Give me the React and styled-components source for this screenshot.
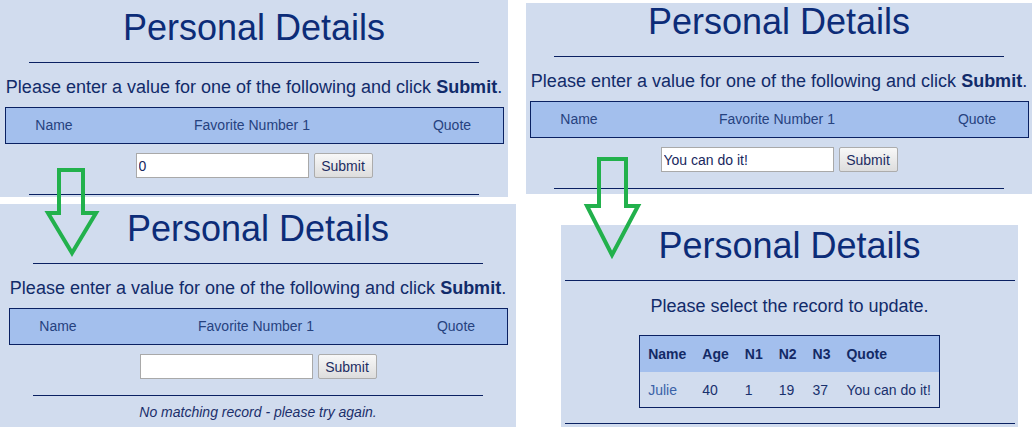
import React from "react";
import styled, { createGlobalStyle } from "styled-components";

const GlobalStyle = createGlobalStyle`
  html, body {
    margin: 0;
    padding: 0;
    background: #fff;
  }
  body {
    font-family: "Liberation Sans", Arial, sans-serif;
  }
`;

// the picture is a collage of four screenshots, so each shot sits on a free canvas
const Canvas = styled.div`
  position: relative;
  width: 1032px;
  height: 431px;
  background: #fff;
  overflow: hidden;
`;

const Shot = styled.section`
  position: absolute;
  left: ${(p) => p.$x}px;
  top: ${(p) => p.$y}px;
  width: ${(p) => p.$w}px;
  height: ${(p) => p.$h}px;
  background: #d1dcee;
  overflow: hidden;
`;

const Page = styled.div`
  margin-top: ${(p) => p.$shift}px;
  display: flex;
  flex-direction: column;
  align-items: center;
  color: #112b6a;
`;

const Title = styled.h1`
  margin: 8px 0 0;
  font-size: 36px;
  font-weight: normal;
  line-height: 40px;
  color: #0c2c78;
  white-space: nowrap;
`;

const Rule = styled.div`
  flex-shrink: 0;
  width: 450px;
  height: 0;
  margin-top: ${(p) => p.$gap}px;
  border-top: 1px solid #0a2162;
`;

const Prompt = styled.p`
  margin: ${(p) => p.$gap}px 0 0;
  font-size: 18px;
  line-height: 22px;
  white-space: nowrap;

  b {
    font-weight: bold;
  }
`;

const HeaderBar = styled.div`
  box-sizing: border-box;
  margin-top: 9px;
  width: 499px;
  height: 37px;
  border: 1px solid #0a2162;
  background: #a3bfed;
  display: grid;
  grid-template-columns: 97px 1fr 101px;
  font-size: 14px;
  line-height: 35px;
  text-align: center;
  color: #26427f;
`;

const SearchRow = styled.form`
  margin-top: 9px;
  display: flex;
  gap: 5px;
  height: 25px;
`;

const Input = styled.input`
  box-sizing: border-box;
  width: 173px;
  height: 25px;
  margin: 0;
  padding: 0 2px;
  border: 1px solid #a9a9a9;
  background: #fff;
  font-family: "Liberation Sans", Arial, sans-serif;
  font-size: 14px;
  color: #18285e;
  outline: none;
`;

const Button = styled.button`
  box-sizing: border-box;
  width: 59px;
  height: 25px;
  margin: 0;
  padding: 0;
  border: 1px solid #acacac;
  border-radius: 2px;
  background: linear-gradient(#f8f8f8, #dddddd);
  font-family: "Liberation Sans", Arial, sans-serif;
  font-size: 14px;
  color: #1d2d62;
`;

const Message = styled.p`
  margin: 7px 0 0;
  font-size: 14px;
  font-style: italic;
  line-height: 18px;
  color: #1b2f6b;
`;

const Records = styled.table`
  margin-top: 18px;
  border-collapse: collapse;
  border: 1px solid #0a2162;
  font-size: 14px;
  color: #18306d;

  th {
    height: 36px;
    padding: 0 8px;
    background: #a3bfed;
    text-align: left;
    font-weight: bold;
    color: #132a66;
  }

  td {
    height: 35px;
    padding: 0 8px;
    text-align: left;
  }
`;

const NameLink = styled.a`
  color: #3a62a8;
  text-decoration: none;
`;

const Arrows = styled.svg`
  position: absolute;
  left: 0;
  top: 0;
  pointer-events: none;
`;

const SearchPage = ({ shift, value, message }) => (
  <Page $shift={shift}>
    <Title>Personal Details</Title>
    <Rule $gap={14} />
    <Prompt $gap={13}>
      Please enter a value for one of the following and click <b>Submit</b>.
    </Prompt>
    <HeaderBar>
      <span>Name</span>
      <span>Favorite Number 1</span>
      <span>Quote</span>
    </HeaderBar>
    <SearchRow onSubmit={(e) => e.preventDefault()}>
      <Input type="text" value={value} readOnly />
      <Button type="submit">Submit</Button>
    </SearchRow>
    <Rule $gap={16} />
    {message && <Message>{message}</Message>}
  </Page>
);

const SelectPage = ({ shift, records }) => (
  <Page $shift={shift}>
    <Title>Personal Details</Title>
    <Rule $gap={14} />
    <Prompt $gap={14}>Please select the record to update.</Prompt>
    <Records>
      <thead>
        <tr>
          <th>Name</th>
          <th>Age</th>
          <th>N1</th>
          <th>N2</th>
          <th>N3</th>
          <th>Quote</th>
        </tr>
      </thead>
      <tbody>
        {records.map((r) => (
          <tr key={r.name}>
            <td>
              <NameLink href="#">{r.name}</NameLink>
            </td>
            <td>{r.age}</td>
            <td>{r.n1}</td>
            <td>{r.n2}</td>
            <td>{r.n3}</td>
            <td>{r.quote}</td>
          </tr>
        ))}
      </tbody>
    </Records>
    <Rule $gap={15} />
  </Page>
);

const records = [
  { name: "Julie", age: 40, n1: 1, n2: 19, n3: 37, quote: "You can do it!" },
];

const App = () => {
  return (
    <>
      <GlobalStyle />
      <Canvas>
        <Shot $x={0} $y={0} $w={508} $h={197}>
          <SearchPage shift={0} value="0" />
        </Shot>
        <Shot $x={526} $y={3} $w={506} $h={191}>
          <SearchPage shift={-9} value="You can do it!" />
        </Shot>
        <Shot $x={0} $y={204} $w={516} $h={223}>
          <SearchPage
            shift={-3}
            value=""
            message="No matching record - please try again."
          />
        </Shot>
        <Shot $x={561} $y={225} $w={457} $h={202}>
          <SelectPage shift={-7} records={records} />
        </Shot>
        <Arrows width="1032" height="431" viewBox="0 0 1032 431">
          <polygon
            points="59,170 83,170 83,213 96,213 72,253 48,213 59,213"
            fill="none"
            stroke="#22b14c"
            strokeWidth="4"
          />
          <polygon
            points="599,159 626,159 626,206 638,206 612,255 587,206 599,206"
            fill="none"
            stroke="#22b14c"
            strokeWidth="4"
          />
        </Arrows>
      </Canvas>
    </>
  );
};

export default App;
